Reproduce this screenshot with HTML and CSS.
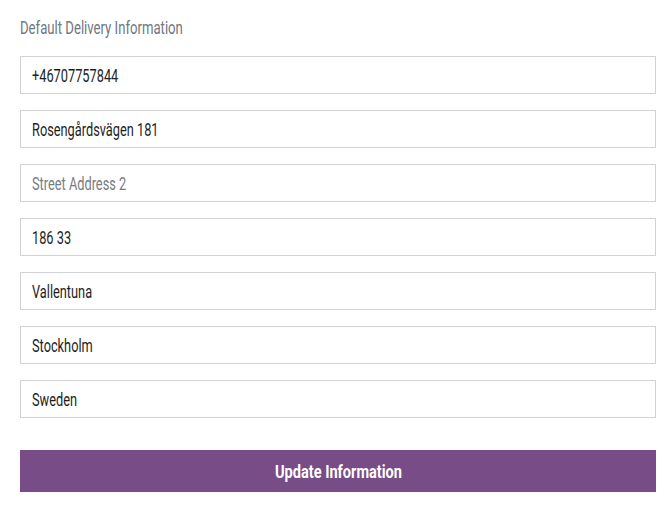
FILE: index.html
```html
<!DOCTYPE html>
<html>
<head>
<meta charset="utf-8">
<link rel="stylesheet" href="styles.css">
</head>
<body>
<form class="delivery">
  <h4 class="title"><span class="narrow">Default Delivery Information</span></h4>
  <div class="fields">
    <div class="field"><span class="narrow">+46707757844</span></div>
    <div class="field"><span class="narrow">Rosengårdsvägen 181</span></div>
    <div class="field placeholder"><span class="narrow">Street Address 2</span></div>
    <div class="field"><span class="narrow">186 33</span></div>
    <div class="field"><span class="narrow">Vallentuna</span></div>
    <div class="field"><span class="narrow">Stockholm</span></div>
    <div class="field"><span class="narrow">Sweden</span></div>
  </div>
  <button class="submit" type="button"><span class="narrow">Update Information</span></button>
</form>
</body>
</html>
```
FILE: styles.css
```css
* { box-sizing: border-box; }
html, body { margin: 0; background: #fff; }
body {
  font-family: Roboto, "Liberation Sans", sans-serif;
  padding: 16px 16px 0 20px;
}
.narrow {
  display: inline-block;
  transform: scaleX(0.71);
  transform-origin: left center;
  white-space: nowrap;
}
.delivery { display: flex; flex-direction: column; }
.title {
  margin: 0 0 16px;
  font-size: 18px;
  font-weight: normal;
  color: #6f7781;
  line-height: 24px;
}
.title .narrow { transform: scaleX(0.73); }
.fields { display: flex; flex-direction: column; gap: 16px; }
.field {
  display: flex;
  align-items: center;
  width: 100%;
  height: 38px;
  border: 1px solid #d0d2d8;
  padding: 0 11px;
  font-size: 18px;
  color: #1e1e1e;
}
.field.placeholder { color: #777c84; }
.submit {
  margin-top: 32px;
  height: 42px;
  width: 100%;
  border: none;
  padding: 0;
  background: #774c87;
  color: #fff;
  font-family: inherit;
  font-weight: bold;
  font-size: 18px;
}
.submit .narrow { transform: scaleX(0.81); transform-origin: center center; }
```
